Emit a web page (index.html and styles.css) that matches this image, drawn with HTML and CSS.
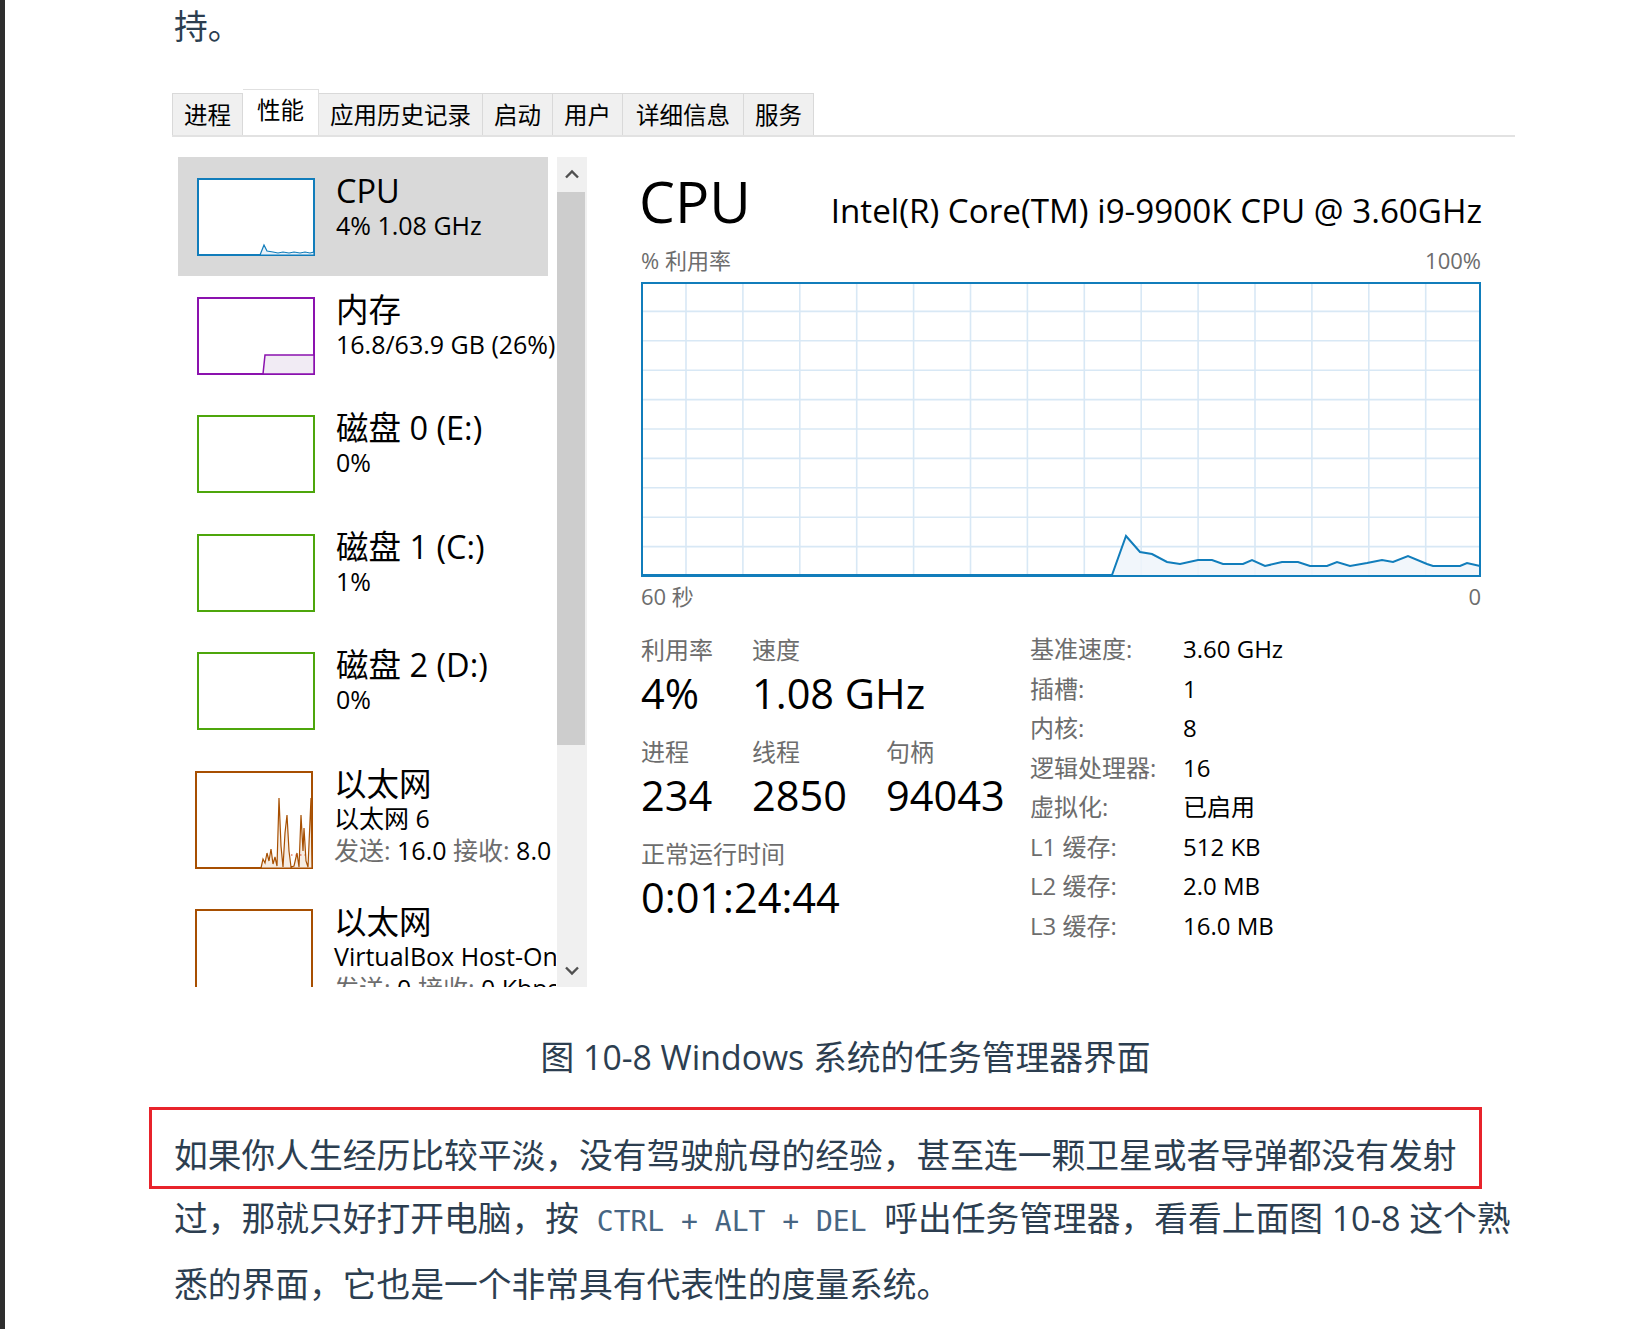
FILE: index.html
```html
<!DOCTYPE html>
<html lang="zh-CN">
<head>
<meta charset="utf-8">
<title>Windows 任务管理器</title>
<link rel="stylesheet" href="styles.css">
</head>
<body>
<div class="edge"></div>
<main class="page">
  <p class="tail">持。</p>
  <figure class="figure">
    <div class="tabs">
      <span class="tab first">进程</span>
      <span class="tab active">性能</span>
      <span class="tab">应用历史记录</span>
      <span class="tab">启动</span>
      <span class="tab">用户</span>
      <span class="tab wide">详细信息</span>
      <span class="tab">服务</span>
    </div>
    <div class="tm">
      <div class="list">
        <div class="item sel">
          <svg class="thumb" viewBox="0 0 118 78"><rect x="1" y="1" width="116" height="76" fill="#fff" stroke="#117dbb" stroke-width="2"/><path d="M63 77 L67 67 L70 73 L76 74 L81 75 L86 74 L92 75 L97 74 L103 75 L108 74 L113 75 L117 74 V77 Z" fill="#eaf2f9" stroke="#117dbb" stroke-width="1.2"/></svg>
          <div class="info"><div class="title">CPU</div><div class="sub">4% 1.08 GHz</div></div>
        </div>
        <div class="item">
          <svg class="thumb" viewBox="0 0 118 78"><rect x="1" y="1" width="116" height="76" fill="#fff" stroke="#8b12ae" stroke-width="2"/><path d="M66 77 L68 58 H117 V77 Z" fill="#f1ebf4" stroke="#8b12ae" stroke-width="1.5"/></svg>
          <div class="info"><div class="title">内存</div><div class="sub">16.8/63.9 GB (26%)</div></div>
        </div>
        <div class="item">
          <svg class="thumb" viewBox="0 0 118 78"><rect x="1" y="1" width="116" height="76" fill="#fff" stroke="#4da60c" stroke-width="2"/></svg>
          <div class="info"><div class="title">磁盘 0 (E:)</div><div class="sub">0%</div></div>
        </div>
        <div class="item">
          <svg class="thumb" viewBox="0 0 118 78"><rect x="1" y="1" width="116" height="76" fill="#fff" stroke="#4da60c" stroke-width="2"/></svg>
          <div class="info"><div class="title">磁盘 1 (C:)</div><div class="sub">1%</div></div>
        </div>
        <div class="item">
          <svg class="thumb" viewBox="0 0 118 78"><rect x="1" y="1" width="116" height="76" fill="#fff" stroke="#4da60c" stroke-width="2"/></svg>
          <div class="info"><div class="title">磁盘 2 (D:)</div><div class="sub">0%</div></div>
        </div>
        <div class="item tall">
          <svg class="thumb big" viewBox="0 0 118 98"><rect x="1" y="1" width="116" height="96" fill="#fff" stroke="#a74f01" stroke-width="2"/><path d="M66 97 L68 88 L70 92 L72 82 L74 90 L76 78 L78 93 L80 86 L82 95 L84 27 L86 75 L88 96 L90 62 L92 44 L94 80 L96 96 L99 95 L102 82 L104 96 L106 44 L108 80 L109 57 L111 90 L113 96 L116 27 L117 97 Z" fill="#f6ede4" stroke="#a74f01" stroke-width="1.2"/><path d="M96 84 H110" stroke="#d2401a" stroke-width="1" stroke-dasharray="1.5 3"/></svg>
          <div class="info"><div class="title">以太网</div><div class="sub">以太网 6</div><div class="sub"><span class="k">发送:</span> 16.0 <span class="k">接收:</span> 8.0 Kbps</div></div>
        </div>
        <div class="item tall">
          <svg class="thumb big" viewBox="0 0 118 98"><rect x="1" y="1" width="116" height="96" fill="#fff" stroke="#a74f01" stroke-width="2"/></svg>
          <div class="info"><div class="title">以太网</div><div class="sub">VirtualBox Host-Only Network</div><div class="sub"><span class="k">发送:</span> 0 <span class="k">接收:</span> 0 Kbps</div></div>
        </div>
      </div>
      <div class="scrollbar">
        <div class="sb-btn"><svg width="16" height="10" viewBox="0 0 16 10"><polyline points="2,8.5 8,2.5 14,8.5" fill="none" stroke="#505050" stroke-width="2.4"/></svg></div>
        <div class="sb-thumb"></div>
        <div class="sb-btn down"><svg width="16" height="10" viewBox="0 0 16 10"><polyline points="2,1.5 8,7.5 14,1.5" fill="none" stroke="#505050" stroke-width="2.4"/></svg></div>
      </div>
      <div class="detail">
        <div class="head"><span class="big">CPU</span><span class="model">Intel(R) Core(TM) i9-9900K CPU @ 3.60GHz</span></div>
        <div class="axis"><span>% 利用率</span><span>100%</span></div>
        <svg class="chart" width="840" height="295" viewBox="0 0 840 295">
          <g stroke="#d8e8f5" stroke-width="1.6">
            <line x1="45" y1="0" x2="45" y2="295"/><line x1="101.9" y1="0" x2="101.9" y2="295"/><line x1="158.8" y1="0" x2="158.8" y2="295"/><line x1="215.7" y1="0" x2="215.7" y2="295"/><line x1="272.6" y1="0" x2="272.6" y2="295"/><line x1="329.5" y1="0" x2="329.5" y2="295"/><line x1="386.4" y1="0" x2="386.4" y2="295"/><line x1="443.3" y1="0" x2="443.3" y2="295"/><line x1="500.2" y1="0" x2="500.2" y2="295"/><line x1="557.1" y1="0" x2="557.1" y2="295"/><line x1="614" y1="0" x2="614" y2="295"/><line x1="670.9" y1="0" x2="670.9" y2="295"/><line x1="727.8" y1="0" x2="727.8" y2="295"/><line x1="784.7" y1="0" x2="784.7" y2="295"/>
            <line x1="0" y1="29.4" x2="840" y2="29.4"/><line x1="0" y1="58.8" x2="840" y2="58.8"/><line x1="0" y1="88.2" x2="840" y2="88.2"/><line x1="0" y1="117.6" x2="840" y2="117.6"/><line x1="0" y1="147" x2="840" y2="147"/><line x1="0" y1="176.4" x2="840" y2="176.4"/><line x1="0" y1="205.8" x2="840" y2="205.8"/><line x1="0" y1="235.2" x2="840" y2="235.2"/><line x1="0" y1="264.6" x2="840" y2="264.6"/>
          </g>
          <polygon points="471,293 485,254 499,270 511,272 526,280 539,282 557,278 571,278 582,282 602,282 611,278 624,284 641,280 657,280 669,284 686,284 696,280 709,284 726,281 741,278 752,280 767,274 786,282 792,284 819,284 826,281 839,284 839,293" fill="#eef4fa" fill-opacity="0.85"/>
          <polyline points="2,293 471,293 485,254 499,270 511,272 526,280 539,282 557,278 571,278 582,282 602,282 611,278 624,284 641,280 657,280 669,284 686,284 696,280 709,284 726,281 741,278 752,280 767,274 786,282 792,284 819,284 826,281 839,284" fill="none" stroke="#117dbb" stroke-width="2"/>
          <rect x="1" y="1" width="838" height="293" fill="none" stroke="#117dbb" stroke-width="2"/>
        </svg>
        <div class="axis lower"><span>60 秒</span><span>0</span></div>
        <div class="stats">
          <div class="dyn">
            <div class="row">
              <div class="stat c1"><div class="lbl">利用率</div><div class="val">4%</div></div>
              <div class="stat"><div class="lbl">速度</div><div class="val">1.08 GHz</div></div>
            </div>
            <div class="row">
              <div class="stat c1"><div class="lbl">进程</div><div class="val">234</div></div>
              <div class="stat c2"><div class="lbl">线程</div><div class="val">2850</div></div>
              <div class="stat"><div class="lbl">句柄</div><div class="val">94043</div></div>
            </div>
            <div class="row">
              <div class="stat"><div class="lbl">正常运行时间</div><div class="val">0:01:24:44</div></div>
            </div>
          </div>
          <dl class="specs">
            <div class="spec"><dt>基准速度:</dt><dd>3.60 GHz</dd></div>
            <div class="spec"><dt>插槽:</dt><dd>1</dd></div>
            <div class="spec"><dt>内核:</dt><dd>8</dd></div>
            <div class="spec"><dt>逻辑处理器:</dt><dd>16</dd></div>
            <div class="spec"><dt>虚拟化:</dt><dd>已启用</dd></div>
            <div class="spec"><dt>L1 缓存:</dt><dd>512 KB</dd></div>
            <div class="spec"><dt>L2 缓存:</dt><dd>2.0 MB</dd></div>
            <div class="spec"><dt>L3 缓存:</dt><dd>16.0 MB</dd></div>
          </dl>
        </div>
      </div>
    </div>
    <figcaption class="caption">图 10-8 Windows 系统的任务管理器界面</figcaption>
  </figure>
  <p class="para"><span class="mark"></span>如果你人生经历比较平淡，没有驾驶航母的经验，甚至连一颗卫星或者导弹都没有发射过，那就只好打开电脑，按 <code class="kbd">CTRL + ALT + DEL</code> 呼出任务管理器，看看上面图 10-8 这个熟悉的界面，它也是一个非常具有代表性的度量系统。</p>
</main>
</body>
</html>
```

FILE: styles.css
```css
html, body {
  margin: 0;
  padding: 0;
  background: #ffffff;
}

body {
  display: flex;
  min-height: 1329px;
  overflow: hidden;
}

.edge {
  width: 5px;
  flex-shrink: 0;
  background: #2e2e2e;
}

.page {
  margin-left: 169px;
  width: 1345px;
  font-family: "Open Sans", "Noto Sans CJK SC", sans-serif;
  font-size: 33.75px;
  color: #2c3e50;
}

.tail {
  margin: 0;
  line-height: 52px;
}

.figure {
  margin: 40px 0 0 -2px;
}

/* ---------- tabs ---------- */
.tabs {
  display: flex;
  align-items: flex-end;
  width: 1343px;
  height: 43px;
  border-bottom: 2px solid #e2e2e2;
  font-family: "Noto Sans CJK SC", sans-serif;
}

.tab {
  height: 42px;
  box-sizing: border-box;
  padding: 0 11px;
  font-size: 23.5px;
  line-height: 40px;
  color: #000;
  background: #f0f0f0;
  border: 1px solid #d9d9d9;
  border-left: none;
  border-bottom: none;
}

.tab.first {
  border-left: 1px solid #d9d9d9;
}

.tab.wide {
  padding: 0 13px;
}

.tab.active {
  height: 46px;
  padding: 0 14px;
  line-height: 38px;
  background: #ffffff;
  border-color: #e0e0e0;
}

/* ---------- task manager ---------- */
.tm {
  display: flex;
  height: 830px;
  margin: 20px 0 0 6px;
  font-family: "Open Sans", "Noto Sans CJK SC", sans-serif;
  color: #000;
}

.list {
  width: 378px;
  height: 830px;
  overflow: hidden;
  flex-shrink: 0;
}

.item {
  display: flex;
  width: 370px;
  height: 118.5px;
  box-sizing: border-box;
  padding: 21px 0 0 19px;
}

.item.tall {
  height: 138px;
}

.item.sel {
  background: #d9d9d9;
}

.thumb {
  width: 118px;
  height: 78px;
  flex: none;
  display: block;
}

.thumb.big {
  height: 98px;
}

.info {
  flex: none;
  width: 220px;
  margin-left: 21px;
  margin-top: -5px;
  white-space: nowrap;
}

.title {
  font-size: 32.5px;
  line-height: 36px;
}

.sub {
  font-size: 25px;
  line-height: 32px;
}

.sub .k {
  color: #6d6d6d;
}

.scrollbar {
  width: 30px;
  margin-left: 1px;
  display: flex;
  flex-direction: column;
  background: #f0f0f0;
  flex-shrink: 0;
}

.sb-btn {
  height: 33px;
  display: flex;
  align-items: center;
  justify-content: center;
}

.sb-btn.down {
  margin-top: auto;
}

.sb-thumb {
  height: 553px;
  margin: 2px 2px 0 0;
  background: #cdcdcd;
}

.detail {
  width: 840px;
  margin-left: 54px;
}

.head {
  display: flex;
  justify-content: space-between;
  align-items: baseline;
  height: 90px;
  box-sizing: border-box;
  padding-top: 9px;
}

.big {
  font-size: 57px;
  line-height: 70px;
  margin-left: -2px;
}

.model {
  font-size: 33.2px;
  margin-right: -1px;
}

.axis {
  display: flex;
  justify-content: space-between;
  font-size: 22px;
  line-height: 26px;
  color: #6d6d6d;
}

.chart {
  display: block;
  margin-top: 9px;
}

.axis.lower {
  margin-top: 6px;
}

.stats {
  display: flex;
  margin-top: 24px;
}

.dyn {
  width: 389px;
  flex-shrink: 0;
}

.row {
  display: flex;
  height: 102px;
}

.stat.c1 {
  width: 111px;
}

.stat.c2 {
  width: 134px;
}

.lbl {
  font-size: 24px;
  line-height: 34px;
  color: #6d6d6d;
}

.val {
  font-size: 41.5px;
  line-height: 52px;
}

.specs {
  margin: -4px 0 0;
}

.spec {
  display: flex;
  height: 39.55px;
  line-height: 39.55px;
  font-size: 24px;
}

.spec dt {
  width: 153px;
  color: #6d6d6d;
}

.spec dd {
  margin: 0;
}

/* ---------- text ---------- */
.caption {
  margin-top: 38.5px;
  line-height: 63px;
  text-align: center;
}

.para {
  position: relative;
  margin: 35px 0 0;
  line-height: 63px;
}

.kbd {
  font-family: "DejaVu Sans Mono", monospace;
  font-size: 28px;
  color: #476582;
  padding: 0 9px;
}

.mark {
  position: absolute;
  left: -25px;
  top: -16.5px;
  width: 1333px;
  height: 82px;
  box-sizing: border-box;
  border: 3px solid #e8232b;
  pointer-events: none;
}
```
